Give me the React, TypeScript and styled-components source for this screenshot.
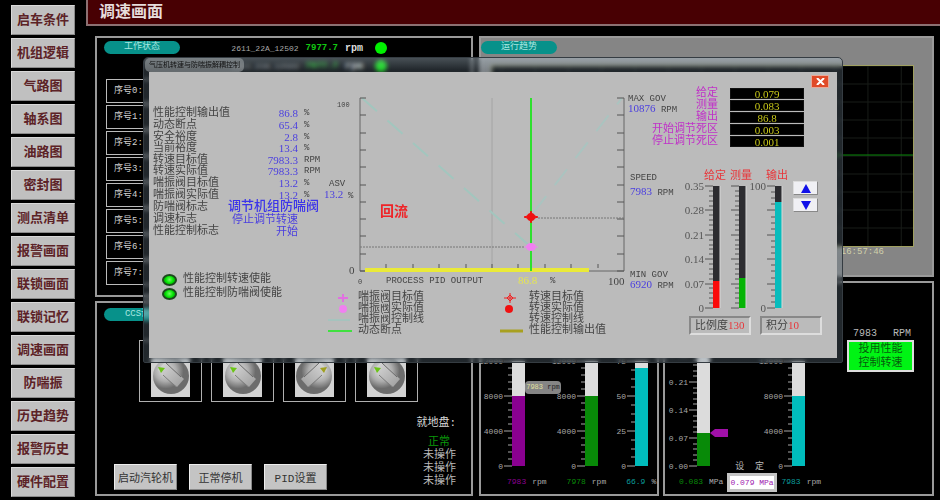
import React from "react";
import styled, { createGlobalStyle } from "styled-components";

const CJK = '"Liberation Mono", "Noto Sans CJK SC", monospace';
const NUM = '"Liberation Serif", "Noto Sans CJK SC", serif';

const GlobalStyle = createGlobalStyle`
  * { box-sizing: border-box; }
  body { margin: 0; background: #000; font-family: ${CJK}; }
  button, input { font-family: inherit; }
  svg { display: block; flex: none; }
`;

const Page = styled.div`
  display: grid;
  grid-template-columns: 86px 1fr;
  min-height: 100vh;
  background: #000;
`;

const Sidebar = styled.nav`
  display: flex;
  flex-direction: column;
  gap: 3px;
  padding: 5px 11px 3px;
`;

const NavButton = styled.button`
  flex: 1;
  padding: 1px 0 0;
  border: 1px solid #d9d9d9;
  border-right-color: #8a8a8a;
  border-bottom-color: #8a8a8a;
  background: #c0c0c0;
  color: #5c2226;
  font-size: 13px;
  line-height: 16px;
  font-weight: 700;
  white-space: nowrap;
`;

const Main = styled.main`
  position: relative;
  display: flex;
  flex-direction: column;
`;

const Header = styled.header`
  height: 26px;
  padding: 1px 0 0 11px;
  border-left: 2px solid #8c7072;
  border-bottom: 2px solid #8c7072;
  background: #480003;
`;

const PageTitle = styled.h1`
  margin: 0;
  color: #e6dcdc;
  font-size: 16px;
  line-height: 24px;
`;

const Workspace = styled.div`
  flex: 1;
  display: grid;
  grid-template-columns: 378px 1fr;
  gap: 6px;
  padding: 10px 6px 4px 9px;
`;

const Column = styled.div`
  display: flex;
  flex-direction: column;
  gap: 4px;
`;

const Panel = styled.section<{ $h?: number; $tone?: string }>`
  display: flex;
  flex-direction: column;
  ${(p) => (p.$h ? `height: ${p.$h}px;` : "flex: 1;")}
  border: 2px solid #9a9a9a;
  background: ${(p) => p.$tone || "#000"};
`;

const PanelRow = styled.div`
  display: grid;
  grid-template-columns: 180px 1fr;
  gap: 4px;
  flex: 1;
`;

const Pill = styled.h2`
  width: 76px;
  margin: 0;
  border-radius: 7px;
  background: #07918a;
  color: #a9e6e0;
  font-size: 9px;
  line-height: 13px;
  font-weight: 400;
  text-align: center;
`;

const StatusHead = styled.div<{ $top: number }>`
  display: flex;
  align-items: flex-start;
  justify-content: space-between;
  padding: ${(p) => p.$top}px 84px 0 7px;
`;

const TagList = styled.div`
  display: flex;
  flex-direction: column;
  gap: 4px;
`;

const TagLine = styled.div`
  display: flex;
  align-items: center;
  gap: 7px;
  height: 14px;
  color: #a8a8a8;
  font-size: 8px;
`;

const TagValue = styled.span`
  color: #12c812;
  font-size: 9px;
  font-weight: 700;
`;

const TagUnit = styled.span`
  margin-right: 5px;
  color: #ddd;
  font-size: 10px;
  font-weight: 700;
`;

const Dot = styled.span`
  width: 12px;
  height: 12px;
  border-radius: 50%;
  background: #00f000;
`;

const SequenceList = styled.ol`
  display: flex;
  flex-direction: column;
  gap: 2px;
  width: 180px;
  margin: 6px 0 0 9px;
  padding: 0;
  list-style: none;
`;

const SequenceItem = styled.li`
  padding-left: 7px;
  border: 1px solid #bbb;
  color: #d0d0d0;
  font-size: 9px;
  line-height: 22px;
`;

const KnobRow = styled.div`
  display: flex;
  gap: 9px;
  margin: 19px 0 0 42px;
`;

const KnobFrame = styled.div`
  display: flex;
  align-items: flex-end;
  justify-content: center;
  width: 63px;
  height: 62px;
  padding-bottom: 4px;
  border: 1px solid #b0b0b0;
`;

const LocalPanel = styled.div`
  flex: 1;
  display: flex;
  align-items: flex-end;
  justify-content: space-between;
  padding: 0 15px 4px 17px;
`;

const ActionRow = styled.div`
  display: flex;
  gap: 12px;
`;

const ActionButton = styled.button`
  width: 63px;
  height: 26px;
  padding: 0;
  border: 1px solid #eee;
  border-right-color: #888;
  border-bottom-color: #888;
  background: #c4c4c4;
  color: #333;
  font-size: 11px;
  white-space: nowrap;
`;

const LocalStates = styled.div`
  display: flex;
  flex-direction: column;
  align-items: flex-end;
  padding-bottom: 2px;
  color: #b8b8b8;
  font-size: 11px;
  line-height: 13px;
`;

const LocalTitle = styled.span`
  margin-bottom: 6px;
  color: #d8d8d8;
`;

const LocalOk = styled.span`
  padding-right: 6px;
  color: #0a980a;
`;

const TrendBody = styled.div`
  flex: 1;
  display: flex;
  flex-direction: column;
  padding: 11px 18px 18px 10px;
`;

const TrendPlot = styled.svg`
  flex: 1;
  width: 100%;
  height: 100px;
  border: 1px solid #a0a060;
  background: #000;
`;

const TrendTime = styled.time`
  align-self: flex-end;
  padding: 1px 30px 0 0;
  color: #d0d0aa;
  font-size: 9px;
  line-height: 9px;
`;

const PillSlot = styled.div`
  padding: 3px 0 0;
`;

const Meters = styled.div`
  flex: 1;
  display: flex;
  align-items: flex-end;
  gap: 19px;
`;

const MeterLine = styled.div<{ $pad: string; $gap: number }>`
  display: flex;
  align-items: center;
  gap: ${(p) => p.$gap}px;
  height: 24px;
  padding: ${(p) => p.$pad};
`;

const MeterValue = styled.span<{ $c: string }>`
  display: flex;
  gap: 6px;
  color: #aaa;
  font-size: 8px;
  line-height: 12px;
  white-space: nowrap;

  b {
    color: ${(p) => p.$c};
    font-weight: 400;
  }
`;

const MeterWrap = styled.div`
  position: relative;
`;

const FloatTag = styled.span`
  position: absolute;
  top: 24px;
  left: 100%;
  width: 36px;
  border-radius: 4px;
  background: #858585;
  color: #222;
  font-size: 7px;
  line-height: 13px;
  text-align: center;
  white-space: nowrap;

  b {
    color: #e0e0a0;
    font-weight: 400;
  }
`;

const FloatMark = styled.svg`
  position: absolute;
  bottom: 33px;
  left: 100%;
`;

const SetLabel = styled.label`
  position: absolute;
  right: -54px;
  bottom: -2px;
  color: #b8b8b8;
  font-size: 9px;
  line-height: 10px;
  white-space: pre;
`;

const SetInput = styled.input`
  width: 50px;
  height: 19px;
  padding: 0;
  border: 3px solid #c4c4c4;
  border-radius: 0;
  background: #fff;
  color: #a020b0;
  font-size: 8px;
`;

const EnableBlock = styled.div`
  align-self: flex-end;
  display: flex;
  flex-direction: column;
  margin: 44px 18px 0 0;
`;

const SpeedText = styled.div`
  display: flex;
  justify-content: space-between;
  padding: 0 3px 0 6px;
  color: #b8b8b8;
  font-size: 10px;
  line-height: 13px;
`;

const EnableButton = styled.button`
  width: 67px;
  padding: 0;
  border: 2px solid #ddd;
  background: #00f414;
  color: #075a0c;
  font-size: 11px;
  line-height: 14px;
`;

const RightBody = styled.div`
  flex: 1;
  display: flex;
  flex-direction: column;
`;

const MeterOverlap = styled.div`
  display: flex;
  align-items: flex-end;
  gap: 49px;
  height: 90px;
  padding-left: 1px;
`;

/* Floating window */

const Dialog = styled.div`
  position: absolute;
  top: 57px;
  left: 57px;
  right: 97px;
  display: flex;
  flex-direction: column;
  padding: 0 5px 4px;
  border: 1px solid #353c42;
  border-radius: 5px 5px 2px 2px;
  background: linear-gradient(rgba(180, 200, 215, 0.4), rgba(110, 130, 145, 0.3) 12px);
  backdrop-filter: blur(2px);
`;

const DialogTitle = styled.h2`
  align-self: flex-start;
  margin: 0 0 0 -4px;
  padding: 0 4px;
  border-radius: 5px;
  background: rgba(170, 175, 178, 0.5);
  color: #111;
  font-size: 7px;
  line-height: 14px;
  font-weight: 400;
  white-space: nowrap;
`;

const DialogBody = styled.div`
  display: grid;
  grid-template-columns: 173px 1fr 210px;
  min-height: 286px;
  background: #bbb;
  color: #444;
  font-size: 11px;
`;

const ReadoutSide = styled.div`
  display: flex;
  flex-direction: column;
  padding: 36px 0 0 4px;
`;

const Readouts = styled.table`
  height: 129px;
  border-collapse: collapse;
  table-layout: fixed;
  width: 173px;
  line-height: 11px;

  th, td {
    padding: 0;
    font-weight: 400;
    text-align: left;
    white-space: nowrap;
  }
  th { width: 84px; }
`;

const ValueCell = styled.td`
  width: 61px;
  color: #4a3ee0;
  font-family: ${NUM};

  span {
    display: flex;
    justify-content: flex-end;
  }
`;

const WideValue = styled.td`
  color: #3c34ea;

  span {
    margin-left: -9px;
    font-size: 13px;
    font-weight: 500;
  }
`;

const UnitCell = styled.td`
  && { padding-left: 6px; }
  font-size: 9px;
`;

const Lamps = styled.div`
  display: flex;
  flex-direction: column;
  gap: 1px;
  margin: 36px 0 0 9px;
  line-height: 13px;
`;

const LampRow = styled.div`
  display: flex;
  align-items: center;
  gap: 6px;
  white-space: nowrap;
`;

const Lamp = styled.span`
  width: 15px;
  height: 12px;
  border: 2px solid #1c4a1c;
  border-radius: 50%;
  background: radial-gradient(circle at 50% 45%, #6cff5c, #00e000 55%, #00a800);
`;

const ChartSide = styled.div`
  display: flex;
  flex-direction: column;
  align-items: center;
  padding-top: 18px;
`;

const Legend = styled.div`
  display: flex;
  gap: 75px;
  width: 306px;
  padding: 2px 0 0 6px;
`;

const LegendList = styled.ul`
  display: flex;
  flex-direction: column;
  margin: 0;
  padding: 0;
  list-style: none;
  line-height: 11px;
  white-space: nowrap;

  li {
    display: flex;
    align-items: center;
    gap: 6px;
    height: 11px;
  }
`;

const ControlSide = styled.div`
  display: flex;
  flex-direction: column;
  padding: 3px 9px 0 0;
`;

const CloseButton = styled.button`
  align-self: flex-end;
  display: flex;
  align-items: center;
  justify-content: center;
  width: 18px;
  height: 13px;
  padding: 0;
  border: 1px solid #e8a898;
  background: #e04a28;
`;

const ControlTop = styled.div`
  display: flex;
  justify-content: space-between;
  padding-right: 25px;
`;

const GovText = styled.div`
  display: flex;
  flex-direction: column;
  padding-top: 7px;
  font-size: 9px;
  line-height: 9px;
  white-space: nowrap;

  b {
    color: #4a3ee0;
    font-family: ${NUM};
    font-size: 11px;
    font-weight: 400;
  }
`;

const Fields = styled.div`
  display: flex;
  flex-direction: column;
  gap: 1px;
`;

const Field = styled.label`
  display: grid;
  grid-template-columns: 22px 74px;
  gap: 12px;
  align-items: center;
  color: #c030c8;
  line-height: 11px;

  span {
    display: flex;
    justify-content: flex-end;
    white-space: nowrap;
  }
`;

const FieldInput = styled.input`
  width: 74px;
  height: 11px;
  padding: 0;
  border: 1px solid #111;
  background: #000;
  color: #c8c818;
  font-family: ${NUM};
  font-size: 11px;
  line-height: 9px;
  text-align: center;
`;

const ControlMid = styled.div`
  display: flex;
  margin-top: 24px;
`;

const SpeedSide = styled.div`
  display: flex;
  flex-direction: column;
  gap: 66px;
  width: 54px;
  margin-top: -4px;
  padding-left: 2px;
`;

const SpeedGap = styled.i`
  height: 4px;
`;

const Gauges = styled.div`
  display: flex;
`;

const GaugeBox = styled.div`
  display: flex;
  flex-direction: column;
  align-items: flex-end;
`;

const GaugeName = styled.span`
  margin-right: -6px;
  color: #e8363a;
  line-height: 11px;
`;

const Steppers = styled.div`
  display: flex;
  flex-direction: column;
  gap: 3px;
  margin: 10px 0 0 11px;
`;

const StepButton = styled.button`
  display: flex;
  align-items: center;
  justify-content: center;
  width: 25px;
  height: 14px;
  padding: 0;
  border: 1px solid #ddd;
  border-right-color: #888;
  border-bottom-color: #888;
  background: #f0f0f4;
`;

const Params = styled.div`
  display: flex;
  gap: 9px;
  padding: 4px 0 0 61px;
`;

const Param = styled.div`
  width: 62px;
  padding-left: 4px;
  border: 2px solid #ddd;
  border-top-color: #888;
  border-left-color: #888;
  line-height: 14px;
  white-space: nowrap;

  b {
    color: #e8363a;
    font-family: ${NUM};
    font-weight: 400;
  }
`;

type GaugeProps = {
  h: number;
  labels: string[];
  minor: number;
  labelW: number;
  barW: number;
  fill: number;
  color: string;
  track: string;
  ink: string;
  size: number;
  edge?: boolean;
  mono?: boolean;
};

function Gauge({ h, labels, minor, labelW, barW, fill, color, track, ink, size, edge, mono }: GaugeProps) {
  const bx = labelW + 9;
  const steps = (labels.length - 1) * minor;
  const ticks = Array.from({ length: steps + 1 }, (_, i) => i);
  return (
    <svg width={bx + barW} height={h + 8} overflow="visible">
      {ticks.map((i) => {
        const y = 4 + Math.round((i * h) / steps);
        const len = i % minor === 0 ? 8 : 4;
        return <line key={i} x1={bx - len} x2={bx} y1={y} y2={y} stroke={ink} />;
      })}
      <rect x={bx} y={4} width={barW} height={h} fill={track} />
      <rect x={bx} y={4 + h - fill} width={barW} height={fill} fill={color} />
      {edge && <line x1={bx + barW} x2={bx + barW} y1={4} y2={4 + h} stroke="#d8d8d8" />}
      {labels.map((t, i) => (
        <text
          key={i}
          x={labelW}
          y={4 + Math.round((i * h) / (labels.length - 1)) + Math.round(size / 3)}
          textAnchor="end"
          fontSize={size}
          fontFamily={mono ? CJK : NUM}
          fill={ink}
        >
          {t}
        </text>
      ))}
    </svg>
  );
}

function Knob({ right }: { right?: boolean }) {
  return (
    <svg width="39" height="40" viewBox="0 0 39 40">
      <defs>
        <radialGradient id="knobFace" cx="35%" cy="35%">
          <stop offset="0" stopColor="#e4e4e4" />
          <stop offset="0.6" stopColor="#acacac" />
          <stop offset="1" stopColor="#6c6c6c" />
        </radialGradient>
        <linearGradient id="knobGrip" x1="0" y1="0" x2="1" y2="1">
          <stop offset="0" stopColor="#dcdcdc" />
          <stop offset="1" stopColor="#9c9c9c" />
        </linearGradient>
      </defs>
      <rect width="39" height="40" fill="#d2d2d2" />
      <g transform={right ? "translate(39 0) scale(-1 1)" : undefined}>
        <circle cx="20" cy="19" r="18" fill="url(#knobFace)" />
        <path d="M7 13 L14 5 L33 22 L26 30 Z" fill="url(#knobGrip)" />
        <path d="M15 6 L30 20" stroke="#6a6a6a" strokeWidth="1" />
        <path d="M12 18 L25 30" stroke="#7c7c7c" strokeWidth="1" />
        <path d="M7 10 L14 11 L10 16 Z" fill={right ? "#a0a020" : "#6cc418"} />
      </g>
    </svg>
  );
}

const range = (n: number) => Array.from({ length: n }, (_, i) => i);

function ProcessChart() {
  return (
    <svg width="306" height="200" viewBox="322 90 306 200" overflow="visible" fontFamily={CJK} fontSize="9" fill="#444">
      <line x1="492" x2="492" y1="98" y2="271" stroke="#a4a4a4" />
      <path d="M362 98 L531 247" stroke="#a2c6be" strokeWidth="2" strokeDasharray="20 14" fill="none" />
      <path d="M534 212 L622 98" stroke="#aac4c0" strokeWidth="2" strokeDasharray="20 14" fill="none" />
      <path d="M360 98 V271 H624 V98" stroke="#666" strokeWidth="1" fill="none" />
      {range(11).map((i) => {
        const y = 98 + Math.round(i * 17.3);
        return <path key={i} d={`M360 ${y} h6 M624 ${y} h-7`} stroke="#555" />;
      })}
      {range(9).map((i) => {
        const x = 360 + Math.round((i + 1) * 26.4);
        return <line key={i} x1={x} x2={x} y1="264" y2="268" stroke="#555" />;
      })}
      <rect x="365" y="268" width="224" height="4" fill="#eaea38" />
      <line x1="360" x2="525" y1="247" y2="247" stroke="#777" strokeDasharray="2 1" />
      <line x1="538" x2="624" y1="218" y2="218" stroke="#777" strokeDasharray="2 1" />
      <rect x="530" y="98" width="2" height="173" fill="#2ee02e" />
      <path d="M531 211 L532 215 L538 217 L532 219 L531 223 L530 219 L524 217 L530 215 Z" fill="#f01010" stroke="#f01010" />
      <circle cx="531" cy="217" r="4" fill="#f01010" />
      <ellipse cx="531" cy="247" rx="5" ry="4" fill="#f080f0" />
      <path d="M524 247 H538" stroke="#f080f0" />
      <text x="337" y="107" fontSize="7">100</text>
      <text x="329" y="186">ASV</text>
      <text x="324" y="198" fill="#4a3ee0" fontFamily={NUM} fontSize="11">13.2</text>
      <text x="348" y="198">%</text>
      <text x="380" y="216" fontSize="14" fontWeight="700" fill="#ee2428">回流</text>
      <text x="349" y="274" fontFamily={NUM} fontSize="11">0</text>
      <text x="358" y="284" fontSize="7">0</text>
      <text x="386" y="283">PROCESS PID OUTPUT</text>
      <text x="518" y="284" fill="#e6e650" fontFamily={NUM} fontSize="11">86.8</text>
      <text x="550" y="283">%</text>
      <text x="608" y="285" fontFamily={NUM} fontSize="11">100</text>
    </svg>
  );
}

const nav = [
  "启车条件", "机组逻辑", "气路图", "轴系图", "油路图", "密封图", "测点清单", "报警画面",
  "联锁画面", "联锁记忆", "调速画面", "防喘振", "历史趋势", "报警历史", "硬件配置",
];

const readouts: [string, string, string][] = [
  ["性能控制输出值", "86.8", "%"],
  ["动态断点", "65.4", "%"],
  ["安全裕度", "2.8", "%"],
  ["当前裕度", "13.4", "%"],
  ["转速目标值", "7983.3", "RPM"],
  ["转速实际值", "7983.3", "RPM"],
  ["喘振阀目标值", "13.2", "%"],
  ["喘振阀实际值", "13.2", "%"],
  ["防喘阀标志", "调节机组防喘阀", "wide"],
  ["调速标志", "停止调节转速", ""],
  ["性能控制标志", "开始", ""],
];

const fields: [string, string][] = [
  ["给定", "0.079"],
  ["测量", "0.083"],
  ["输出", "86.8"],
  ["开始调节死区", "0.003"],
  ["停止调节死区", "0.001"],
];

const meter = { ink: "#a8a8a8", track: "#dcdcdc", size: 8, mono: true, barW: 13, h: 105 };
const dial = { ink: "#555", track: "#2c2c30", size: 11, barW: 7, h: 122, edge: true };
const speedLabels = ["12000", "8000", "4000", "0"];

export default function App() {
  return (
    <>
      <GlobalStyle />
      <Page>
        <Sidebar>
          {nav.map((n) => (
            <NavButton key={n}>{n}</NavButton>
          ))}
        </Sidebar>
        <Main>
          <Header>
            <PageTitle>调速画面</PageTitle>
          </Header>
          <Workspace>
            <Column>
              <Panel $h={261}>
                <StatusHead $top={3}>
                  <Pill>工作状态</Pill>
                  <TagList>
                    {["2611_22A_12502", "2611_22A_12503"].map((tag) => (
                      <TagLine key={tag}>
                        {tag} <TagValue>7977.7</TagValue>
                        <TagUnit>rpm</TagUnit>
                        <Dot />
                      </TagLine>
                    ))}
                  </TagList>
                </StatusHead>
                <SequenceList>
                  {range(8).map((i) => (
                    <SequenceItem key={i}>序号{i}:</SequenceItem>
                  ))}
                </SequenceList>
              </Panel>
              <Panel>
                <StatusHead $top={5}>
                  <Pill>CCS调速</Pill>
                </StatusHead>
                <KnobRow>
                  <KnobFrame><Knob /></KnobFrame>
                  <KnobFrame><Knob /></KnobFrame>
                  <KnobFrame><Knob right /></KnobFrame>
                  <KnobFrame><Knob /></KnobFrame>
                </KnobRow>
                <LocalPanel>
                  <ActionRow>
                    <ActionButton>启动汽轮机</ActionButton>
                    <ActionButton>正常停机</ActionButton>
                    <ActionButton>PID设置</ActionButton>
                  </ActionRow>
                  <LocalStates>
                    <LocalTitle>就地盘:</LocalTitle>
                    <LocalOk>正常</LocalOk>
                    <span>未操作</span>
                    <span>未操作</span>
                    <span>未操作</span>
                  </LocalStates>
                </LocalPanel>
              </Panel>
            </Column>
            <Column>
              <Panel $h={241} $tone="#858585">
                <PillSlot>
                  <Pill>运行趋势</Pill>
                </PillSlot>
                <TrendBody>
                  <TrendPlot viewBox="0 0 430 180" preserveAspectRatio="none">
                    {range(13).map((i) => (
                      <line key={i} x1={i * 34 + 10} x2={i * 34 + 10} y1="0" y2="180" stroke="#181c18" />
                    ))}
                    {range(10).map((i) => (
                      <line key={i} x1="0" x2="430" y1={i * 18} y2={i * 18} stroke="#181c18" />
                    ))}
                    <line x1="0" x2="430" y1="89" y2="89" stroke="#0a8a0a" />
                  </TrendPlot>
                  <TrendTime>16:57:46</TrendTime>
                </TrendBody>
              </Panel>
              <PanelRow>
                <Panel>
                  <Meters>
                    <MeterWrap>
                      <Gauge {...meter} labels={speedLabels} minor={5} labelW={22} fill={70} color="#8a0090" />
                      <FloatTag>
                        <b>7983</b> rpm
                      </FloatTag>
                    </MeterWrap>
                    <Gauge {...meter} labels={speedLabels} minor={5} labelW={32} fill={70} color="#088a08" />
                    <Gauge {...meter} labels={["75", "50", "25", "0"]} minor={4} labelW={9} fill={98} color="#00bcbc" />
                  </Meters>
                  <MeterLine $pad="0 4px 0 26px" $gap={20}>
                    <MeterValue $c="#8a0090"><b>7983</b>rpm</MeterValue>
                    <MeterValue $c="#088a08"><b>7978</b>rpm</MeterValue>
                    <MeterValue $c="#0a9c9c"><b>66.9</b>%</MeterValue>
                  </MeterLine>
                </Panel>
                <Panel>
                  <RightBody>
                    <EnableBlock>
                      <SpeedText>
                        <span>7983</span>
                        <span>RPM</span>
                      </SpeedText>
                      <EnableButton>
                        投用性能
                        <br />
                        控制转速
                      </EnableButton>
                    </EnableBlock>
                  </RightBody>
                  <MeterOverlap>
                    <MeterWrap>
                      <Gauge {...meter} h={112} labels={["0.28", "0.21", "0.14", "0.07", "0.00"]} minor={5} labelW={22} fill={33} color="#088a08" />
                      <FloatMark width="18" height="8" viewBox="0 0 18 8">
                        <path d="M0 4 L5 0 H18 V8 H5 Z" fill="#a010a8" />
                      </FloatMark>
                      <SetLabel htmlFor="setpoint">设  定</SetLabel>
                    </MeterWrap>
                    <Gauge {...meter} labels={speedLabels} minor={5} labelW={24} fill={70} color="#00bcbc" />
                  </MeterOverlap>
                  <MeterLine $pad="0 0 0 14px" $gap={4}>
                    <MeterValue $c="#088a08"><b>0.083</b>MPa</MeterValue>
                    <SetInput id="setpoint" defaultValue="0.079 MPa" />
                    <MeterValue $c="#0a9c9c"><b>7983</b>rpm</MeterValue>
                  </MeterLine>
                </Panel>
              </PanelRow>
            </Column>
          </Workspace>
          <Dialog role="dialog" aria-labelledby="dialog-title">
            <DialogTitle id="dialog-title">气压机转速与防喘振解耦控制</DialogTitle>
            <DialogBody>
              <ReadoutSide>
                <Readouts>
                  <tbody>
                    {readouts.map(([name, value, unit]) => (
                      <tr key={name}>
                        <th scope="row">{name}</th>
                        {unit === "wide" ? (
                          <WideValue colSpan={2}><span>{value}</span></WideValue>
                        ) : (
                          <>
                            <ValueCell><span>{value}</span></ValueCell>
                            <UnitCell>{unit}</UnitCell>
                          </>
                        )}
                      </tr>
                    ))}
                  </tbody>
                </Readouts>
                <Lamps>
                  <LampRow><Lamp />性能控制转速使能</LampRow>
                  <LampRow><Lamp />性能控制防喘阀使能</LampRow>
                </Lamps>
              </ReadoutSide>
              <ChartSide>
                <ProcessChart />
                <Legend>
                  <LegendList>
                    <li>
                      <svg width="24" height="10"><path d="M15 1 V9 M10 5 H20" stroke="#e070e0" strokeWidth="2" /></svg>
                      喘振阀目标值
                    </li>
                    <li>
                      <svg width="24" height="10"><circle cx="15" cy="5" r="4" fill="#f080f0" /></svg>
                      喘振阀实际值
                    </li>
                    <li>
                      <svg width="24" height="10"><path d="M0 5 H22" stroke="#90ccc0" /></svg>
                      喘振阀控制线
                    </li>
                    <li>
                      <svg width="24" height="10"><path d="M0 5 H24" stroke="#40e040" strokeWidth="2" /></svg>
                      动态断点
                    </li>
                  </LegendList>
                  <LegendList>
                    <li>
                      <svg width="24" height="10">
                        <path d="M11 0 V10 M5 5 H17" stroke="#f02020" />
                        <path d="M11 2 L14 5 L11 8 L8 5 Z" fill="none" stroke="#f02020" />
                      </svg>
                      转速目标值
                    </li>
                    <li>
                      <svg width="24" height="10"><circle cx="10" cy="5" r="4" fill="#f01010" /></svg>
                      转速实际值
                    </li>
                    <li>
                      <svg width="24" height="10" />
                      转速控制线
                    </li>
                    <li>
                      <svg width="24" height="10"><path d="M1 5 H24" stroke="#a8a020" strokeWidth="3" /></svg>
                      性能控制输出值
                    </li>
                  </LegendList>
                </Legend>
              </ChartSide>
              <ControlSide>
                <CloseButton aria-label="关闭">
                  <svg width="9" height="7" viewBox="0 0 9 7">
                    <path d="M1 0 L8 7 M8 0 L1 7" stroke="#fff" strokeWidth="2" />
                  </svg>
                </CloseButton>
                <ControlTop>
                  <GovText>
                    <span>MAX GOV</span>
                    <span><b>10876</b> RPM</span>
                  </GovText>
                  <Fields>
                    {fields.map(([name, value]) => (
                      <Field key={name}>
                        <span>{name}</span>
                        <FieldInput defaultValue={value} />
                      </Field>
                    ))}
                  </Fields>
                </ControlTop>
                <ControlMid>
                  <SpeedSide>
                    <GovText>
                      <span>SPEED</span>
                      <SpeedGap />
                      <span><b>7983</b> RPM</span>
                    </GovText>
                    <GovText>
                      <span>MIN GOV</span>
                      <span><b>6920</b> RPM</span>
                    </GovText>
                  </SpeedSide>
                  <Gauges>
                    <GaugeBox>
                      <GaugeName>给定</GaugeName>
                      <Gauge {...dial} labels={["0.35", "0.28", "0.21", "0.14", "0.07", "0"]} minor={5} labelW={22} fill={27} color="#fa0a0a" />
                    </GaugeBox>
                    <GaugeBox>
                      <GaugeName>测量</GaugeName>
                      <Gauge {...dial} labels={["", "", "", "", "", ""]} minor={5} labelW={10} fill={30} color="#06b406" />
                    </GaugeBox>
                    <GaugeBox>
                      <GaugeName>输出</GaugeName>
                      <Gauge {...dial} labels={["100", "", "", "", "", "0"]} minor={4} labelW={20} fill={106} color="#08bcbc" />
                    </GaugeBox>
                  </Gauges>
                  <Steppers>
                    <StepButton aria-label="增加">
                      <svg width="10" height="9"><path d="M5 0 L10 9 H0 Z" fill="#1010e8" /></svg>
                    </StepButton>
                    <StepButton aria-label="减少">
                      <svg width="10" height="9"><path d="M5 9 L10 0 H0 Z" fill="#1010e8" /></svg>
                    </StepButton>
                  </Steppers>
                </ControlMid>
                <Params>
                  <Param>比例度<b>130</b></Param>
                  <Param>积分<b>10</b></Param>
                </Params>
              </ControlSide>
            </DialogBody>
          </Dialog>
        </Main>
      </Page>
    </>
  );
}
